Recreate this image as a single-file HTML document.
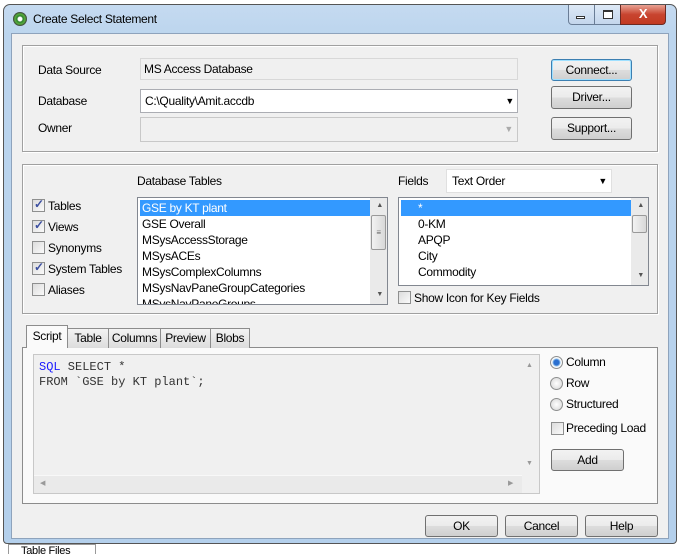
<!DOCTYPE html>
<html><head><meta charset="utf-8"><style>
*{box-sizing:border-box;margin:0;padding:0}
body{width:679px;height:550px;background:#fff;position:relative;overflow:hidden;font-family:"Liberation Sans",Arial,sans-serif;font-size:12px;letter-spacing:-0.3px;color:#000}
.a{position:absolute}
.frame{left:3px;top:4px;width:674px;height:540px;border:1px solid #555;border-radius:7px 7px 4px 4px;background:linear-gradient(180deg,#c5daf0 0,#bcd5ee 30px,#b4d0ec 100%)}
.client{left:11px;top:33px;width:658px;height:506px;background:#f0f0f0;border:1px solid #8ea3bc}
.grp{border:1px solid #a0a0a0;box-shadow:inset 1px 1px 0 #fff,1px 1px 0 #fff}
.btn{border:1px solid #707070;border-radius:3px;background:linear-gradient(#f2f2f2 0,#ebebeb 50%,#dddddd 51%,#cfcfcf 100%);text-align:center;line-height:20px}
.field{border:1px solid #abadb3;background:#fff}
.cb{width:13px;height:13px;border:1px solid #8e8f8f;background:linear-gradient(135deg,#dcdcdc,#fafafa)}
.chk::after{content:"✓";position:absolute;left:1px;top:-3px;font-size:12px;color:#3c4fa0;font-weight:bold}
.rb{width:13px;height:13px;border:1px solid #8e8f8f;border-radius:50%;background:radial-gradient(#fff,#d4d4d4)}
.item{position:absolute;left:2px;height:16px;line-height:16px;padding-left:2px;width:231px}
.sb{background:#eaeaea}
.arr{font-size:7px;color:#555;text-align:center;position:absolute}
.tab{position:absolute;top:328px;height:20px;border:1px solid #8c8c8c;border-bottom:none;background:linear-gradient(#f3f3f3,#dcdcdc);text-align:center;line-height:19px}
.mono{font-family:"Liberation Mono",monospace;font-size:12px;letter-spacing:0}
</style></head><body>
<div class="a" style="left:0;top:540px;width:679px;height:10px;background:#fff"></div>
<div class="a" style="left:8px;top:544px;width:88px;height:10px;border:1px solid #999;border-bottom:none;font-size:11px;padding-left:12px;line-height:12px">Table Files</div>
<div class="a frame"></div>
<div class="a" style="left:13px;top:12px;width:14px;height:14px;border-radius:50%;background:radial-gradient(circle,#fff 0 2px,#2b7d2b 3px,#58b03e 5px,#3a3a3a 7px)"></div>
<div class="a" style="left:33px;top:12px;font-size:12px">Create Select Statement</div>
<div class="a" style="left:568px;top:5px;width:53px;height:20px;border:1px solid #6a7d96;border-top:none;border-radius:0 0 0 4px;background:linear-gradient(#dde9f6,#c4d6ec)"></div>
<div class="a" style="left:594px;top:5px;width:1px;height:20px;background:#6a7d96"></div>
<div class="a" style="left:576px;top:16px;width:9px;height:3px;border:1px solid #333;background:#fff"></div>
<div class="a" style="left:603px;top:10px;width:10px;height:9px;border:1px solid #333;border-top-width:2px;background:#fff"></div>
<div class="a" style="left:620px;top:5px;width:46px;height:20px;border:1px solid #6d2a22;border-top:none;border-radius:0 0 4px 0;background:linear-gradient(#e8a293,#c8442f 50%,#c23a22);color:#fff;text-align:center;font-weight:bold;font-size:13px;line-height:18px">X</div>
<div class="a client"></div>
<div class="a grp" style="left:22px;top:45px;width:636px;height:107px"></div>
<div class="a" style="left:38px;top:63px">Data Source</div>
<div class="a" style="left:38px;top:94px">Database</div>
<div class="a" style="left:38px;top:121px">Owner</div>
<div class="a" style="left:140px;top:58px;width:378px;height:22px;border:1px solid #d8d8d8;background:#f0f0f0;padding-left:3px;line-height:20px">MS Access Database</div>
<div class="a field" style="left:140px;top:89px;width:378px;height:24px;padding-left:4px;line-height:22px">C:\Quality\Amit.accdb<span class="a" style="right:3px;top:0;font-size:9px">▼</span></div>
<div class="a" style="left:140px;top:117px;width:378px;height:25px;border:1px solid #c8c8c8;background:#f0f0f0"><span class="a" style="right:4px;top:6px;font-size:9px;color:#aaa">▼</span></div>
<div class="a btn" style="left:551px;top:59px;width:81px;height:22px;border-color:#3c7fb1;box-shadow:inset 0 0 0 1px #9fe0ff">Connect...</div>
<div class="a btn" style="left:551px;top:86px;width:81px;height:23px">Driver...</div>
<div class="a btn" style="left:551px;top:117px;width:81px;height:23px">Support...</div>
<div class="a grp" style="left:22px;top:164px;width:636px;height:150px"></div>
<div class="a" style="left:137px;top:174px">Database Tables</div>
<div class="a" style="left:398px;top:174px">Fields</div>
<div class="a field" style="left:446px;top:169px;width:166px;height:24px;border-color:#e0e0e0;padding-left:5px;line-height:22px">Text Order<span class="a" style="right:4px;top:0;font-size:9px">▼</span></div>
<div class="a cb chk" style="left:32px;top:199px"></div><div class="a" style="left:48px;top:199px">Tables</div>
<div class="a cb chk" style="left:32px;top:220px"></div><div class="a" style="left:48px;top:220px">Views</div>
<div class="a cb" style="left:32px;top:241px"></div><div class="a" style="left:48px;top:241px">Synonyms</div>
<div class="a cb chk" style="left:32px;top:262px"></div><div class="a" style="left:48px;top:262px">System Tables</div>
<div class="a cb" style="left:32px;top:283px"></div><div class="a" style="left:48px;top:283px">Aliases</div>
<div class="a field" style="left:137px;top:197px;width:251px;height:108px;overflow:hidden;border-color:#828790">
<div class="item" style="top:2px;background:#3399ff;color:#fff">GSE by KT plant</div>
<div class="item" style="top:18px">GSE Overall</div>
<div class="item" style="top:34px">MSysAccessStorage</div>
<div class="item" style="top:50px">MSysACEs</div>
<div class="item" style="top:66px">MSysComplexColumns</div>
<div class="item" style="top:82px">MSysNavPaneGroupCategories</div>
<div class="item" style="top:98px">MSysNavPaneGroups</div>
<div class="a sb" style="right:0;top:0;width:17px;height:106px"></div>
<div class="arr" style="right:4px;top:4px">▲</div><div class="arr" style="right:4px;top:93px">▼</div>
<div class="a" style="right:1px;top:17px;width:15px;height:35px;border:1px solid #999;border-radius:2px;background:linear-gradient(90deg,#f2f2f2,#d8d8d8);font-size:8px;text-align:center;line-height:33px;color:#666">≡</div>
</div>
<div class="a field" style="left:398px;top:197px;width:251px;height:89px;overflow:hidden;border-color:#828790">
<div class="item" style="top:2px;background:#3399ff;color:#fff;padding-left:17px;width:230px">*</div>
<div class="item" style="top:18px;padding-left:17px">0-KM</div>
<div class="item" style="top:34px;padding-left:17px">APQP</div>
<div class="item" style="top:50px;padding-left:17px">City</div>
<div class="item" style="top:66px;padding-left:17px">Commodity</div>
<div class="a sb" style="right:0;top:0;width:17px;height:87px"></div>
<div class="arr" style="right:4px;top:4px">▲</div><div class="arr" style="right:4px;top:74px">▼</div>
<div class="a" style="right:1px;top:17px;width:15px;height:18px;border:1px solid #999;border-radius:2px;background:linear-gradient(90deg,#f2f2f2,#d8d8d8)"></div>
</div>
<div class="a cb" style="left:398px;top:291px"></div><div class="a" style="left:414px;top:291px">Show Icon for Key Fields</div>
<div class="a" style="left:22px;top:347px;width:636px;height:157px;border:1px solid #8c8c8c;background:#fafafa"></div>
<div class="tab" style="left:67px;width:42px">Table</div>
<div class="tab" style="left:108px;width:53px">Columns</div>
<div class="tab" style="left:160px;width:51px">Preview</div>
<div class="tab" style="left:210px;width:40px">Blobs</div>
<div class="tab" style="left:26px;top:325px;width:42px;height:23px;background:#fafafa;line-height:21px">Script</div>
<div class="a" style="left:33px;top:354px;width:507px;height:140px;border:1px solid #c8c8c8;background:#f0f0f0"></div>
<div class="a" style="left:522px;top:355px;width:17px;height:120px;background:#f0f0f0"></div>
<div class="arr" style="left:526px;top:362px;color:#999">▲</div><div class="arr" style="left:526px;top:460px;color:#999">▼</div>
<div class="a" style="left:34px;top:475px;width:488px;height:18px;background:#eaeaea;border-top:1px solid #f8f8f8"></div>
<div class="arr" style="left:40px;top:479px;color:#999">◀</div><div class="arr" style="left:508px;top:479px;color:#999">▶</div>
<div class="a mono" style="left:39px;top:360px;line-height:15px;color:#333"><span style="color:#1a1aff">SQL</span> SELECT *<br>FROM `GSE by KT plant`;</div>
<div class="a rb" style="left:550px;top:356px;background:radial-gradient(#2a6fd0 0 2.5px,#86b8e8 3.5px,#fff 4.5px,#d4d4d4)"></div><div class="a" style="left:566px;top:355px">Column</div>
<div class="a rb" style="left:550px;top:377px"></div><div class="a" style="left:566px;top:376px">Row</div>
<div class="a rb" style="left:550px;top:398px"></div><div class="a" style="left:566px;top:397px">Structured</div>
<div class="a cb" style="left:551px;top:422px"></div><div class="a" style="left:566px;top:421px">Preceding Load</div>
<div class="a btn" style="left:551px;top:449px;width:73px;height:22px">Add</div>
<div class="a btn" style="left:425px;top:515px;width:73px;height:22px">OK</div>
<div class="a btn" style="left:505px;top:515px;width:73px;height:22px">Cancel</div>
<div class="a btn" style="left:585px;top:515px;width:73px;height:22px">Help</div>
</body></html>
